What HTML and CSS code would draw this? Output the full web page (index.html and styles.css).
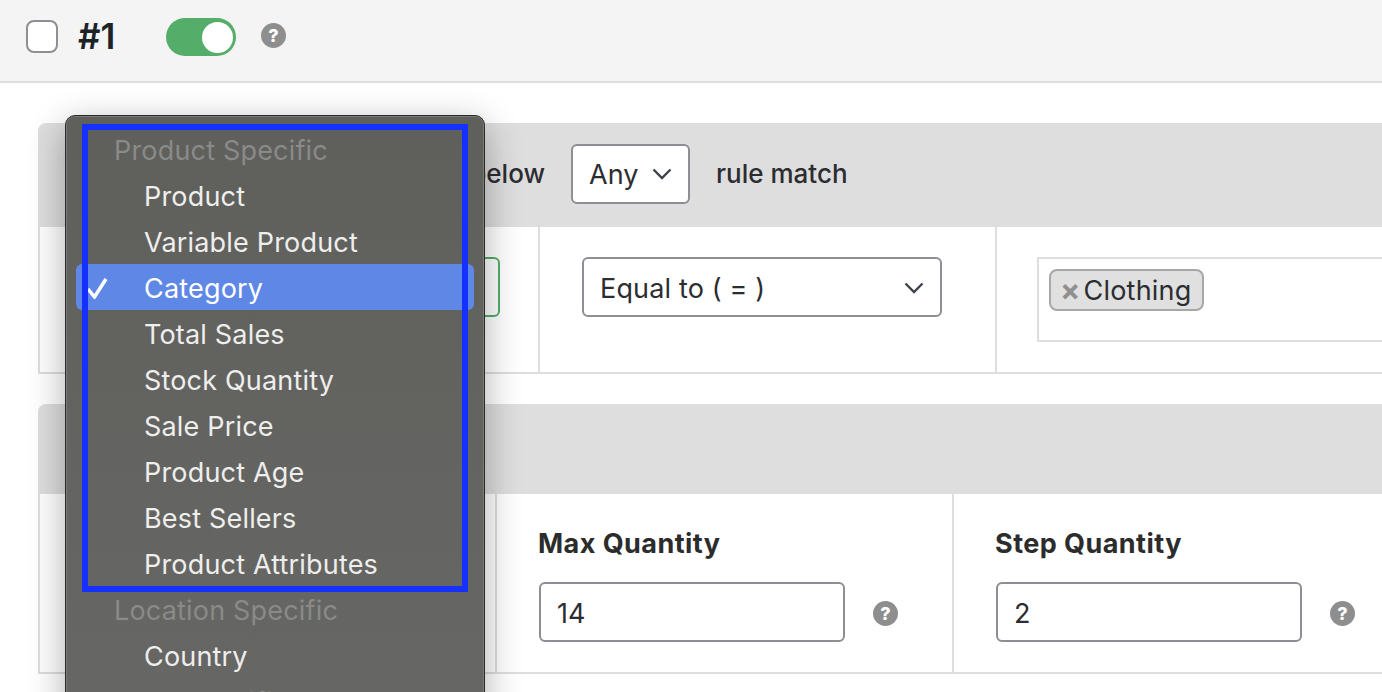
FILE: index.html
```html
<!DOCTYPE html>
<html lang="en">
<head>
<meta charset="utf-8">
<title>Rule #1</title>
<link rel="stylesheet" href="styles.css">
</head>
<body>
<div class="app">
  <header class="rule-head">
    <span class="checkbox"></span>
    <h1 class="rule-num">#1</h1>
    <span class="toggle"><span class="knob"></span></span>
    <span class="help help-top">?</span>
  </header>
  <main class="content">
    <section class="panel panel-a">
      <div class="panel-bar">
        <span class="bar-text">below</span>
        <span class="field any-select">Any
          <svg class="chev" viewBox="0 0 20 12"><path d="M1.500 1.500 10 10l8.500-8.500"/></svg>
        </span>
        <span class="bar-text">rule match</span>
      </div>
      <div class="panel-row cols-a">
        <div class="cell"><span class="field green-select"></span></div>
        <div class="cell cell-op"><span class="field op-select">Equal to ( = )
          <svg class="chev" viewBox="0 0 20 12"><path d="M1.500 1.500 10 10l8.500-8.500"/></svg>
        </span></div>
        <div class="cell cell-tags"><div class="tags"><span class="chip"><span class="chip-x">×</span>Clothing</span></div></div>
      </div>
    </section>
    <section class="panel panel-b">
      <div class="panel-bar bar-empty"></div>
      <div class="panel-row cols-b">
        <div class="cell"></div>
        <div class="cell qty">
          <label class="qty-label">Max Quantity</label>
          <div class="qty-line"><span class="field qty-input">14</span><span class="help">?</span></div>
        </div>
        <div class="cell qty">
          <label class="qty-label">Step Quantity</label>
          <div class="qty-line"><span class="field qty-input">2</span><span class="help">?</span></div>
        </div>
      </div>
    </section>
  </main>
  <div class="menu">
    <div class="menu-group">Product Specific</div>
    <div class="menu-item">Product</div>
    <div class="menu-item">Variable Product</div>
    <div class="menu-item selected">
      <svg class="tick" viewBox="0 0 22 22"><path d="M2 12l6.500 8L20 2"/></svg>
      Category
    </div>
    <div class="menu-item">Total Sales</div>
    <div class="menu-item">Stock Quantity</div>
    <div class="menu-item">Sale Price</div>
    <div class="menu-item">Product Age</div>
    <div class="menu-item">Best Sellers</div>
    <div class="menu-item">Product Attributes</div>
    <div class="menu-group">Location Specific</div>
    <div class="menu-item">Country</div>
    <div class="menu-group">User Specific</div>
    <div class="highlight"></div>
  </div>
</div>
</body>
</html>
```
FILE: styles.css
```css
* { box-sizing: border-box; }
html, body { margin: 0; height: 100%; }
body { background: #fff; color: #2c2d30; font-family: Inter, "Liberation Sans", sans-serif; font-size: 27px; overflow: hidden; }
.app { position: relative; width: 1382px; height: 692px; overflow: hidden; }
.rule-head { display: flex; align-items: center; height: 83px; padding: 0 0 9px 26px; background: #f4f4f4; border-bottom: 2px solid #dedede; }
.checkbox { width: 32px; height: 33px; background: #fff; border: 2px solid #8e8e93; border-radius: 8px; }
.rule-num { margin: 0 0 0 20px; width: 88px; font-size: 35px; font-weight: 600; color: #1d2327; }
.toggle { display: flex; align-items: center; justify-content: flex-end; width: 70px; height: 38px; margin-top: 2px; padding-right: 3px; background: #55ad6a; border-radius: 19px; }
.knob { width: 31px; height: 31px; background: #fff; border-radius: 50%; }
.help { display: flex; align-items: center; justify-content: center; width: 25px; height: 25px; flex: none; background: #8e8e8e; color: #fff; border-radius: 50%; font-size: 18px; font-weight: 800; }
.help-top { margin: -1px 0 0 25px; }
.content { padding: 40px 0 0 38px; width: 1700px; }
.panel-bar { display: flex; align-items: center; height: 104px; padding-bottom: 2px; background: #dedede; border-radius: 8px 8px 0 0; }
.bar-empty { height: 90px; padding-bottom: 0; }
.panel-b { margin-top: 30px; }
.bar-text { margin-bottom: 2px; white-space: nowrap; font-size: 26px; font-weight: 500; }
.bar-text:first-child { width: 507px; text-align: right; margin-right: 26px; }
.bar-text:last-child { margin-left: 26px; }
.field { display: flex; align-items: center; justify-content: space-between; height: 60px; background: #fff; border: 2px solid #8e8e93; border-radius: 6px; padding: 2px 16px 0; }
.chev { width: 20px; height: 12px; fill: none; stroke: #3c434a; stroke-width: 2.400; }
.any-select { width: 119px; padding-top: 0; }
.panel-row { display: grid; border-left: 2px solid #dedede; border-bottom: 2px solid #dedede; }
.cols-a { grid-template-columns: 498px 457px 1fr; height: 147px; }
.cols-b { grid-template-columns: 455px 457px 1fr; height: 180px; }
.cell { padding: 30px 40px; border-left: 2px solid #dedede; }
.cell:first-child { border-left: 0; }
.green-select { width: 420px; border-color: #55ad6a; }
.cell-op { padding-left: 42px; }
.op-select { width: 360px; letter-spacing: .15px; }
.cell-tags { padding-bottom: 0; }
.tags { width: 500px; height: 85px; padding: 10px; border: 2px solid #dedede; }
.chip { display: inline-flex; align-items: center; height: 42px; padding: 0 11px 0 9px; background: #e0e0e0; border: 2px solid #a7a7a7; border-radius: 8px; letter-spacing: .2px; }
.chip-x { margin-right: 3px; color: #8f8f8f; font-size: 30px; font-weight: 700; }
.qty { padding: 30px 40px 0 42px; }
.qty-label { display: block; height: 58px; margin-left: -1px; padding-top: 3px; font-weight: 700; letter-spacing: .45px; color: #2c2c2c; }
.qty-line { display: flex; align-items: center; }
.qty-input { width: 306px; }
.qty-line .help { margin: 3px 0 0 28px; }
.menu { position: absolute; left: 65px; top: 115px; width: 420px; height: 640px; padding: 10px 0 0 10px; background: linear-gradient(#5f5f5c, #676765); border: 1px solid #2a2a2a; border-radius: 10px; box-shadow: inset 0 0 0 1px #7a7a78, 0 10px 36px rgba(0, 0, 0, .32); color: #eeeeec; letter-spacing: .18px; }
.menu-group, .menu-item { position: relative; display: flex; align-items: center; width: 398px; height: 46px; padding-top: 2px; }
.menu-group { padding-left: 38px; color: #8a8a88; }
.menu-item { padding-left: 68px; }
.selected { background: #5f88e6; border-radius: 6px; color: #fff; }
.tick { position: absolute; left: 10px; top: 13px; width: 22px; height: 22px; fill: none; stroke: #fff; stroke-width: 3.500; }
.highlight { position: absolute; left: 16px; top: 8px; width: 386px; height: 468px; border: 6px solid #1431ff; pointer-events: none; }
```
